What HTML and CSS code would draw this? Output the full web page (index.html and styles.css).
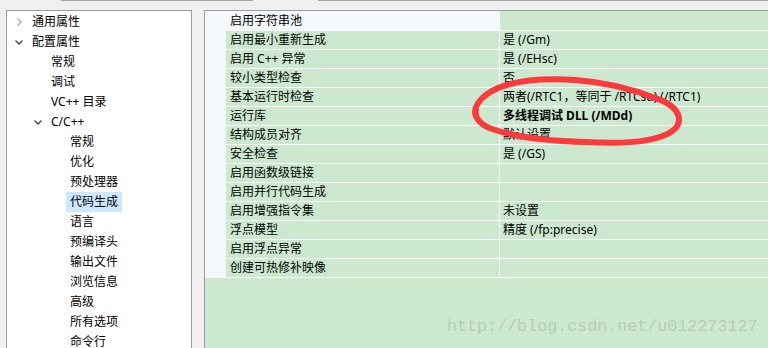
FILE: index.html
```html
<!DOCTYPE html>
<html lang="zh-CN">
<head>
  <meta charset="UTF-8">
  <title>代码生成</title>
  <link rel="stylesheet" href="styles.css">
</head>
<body>
  <div class="topbar">
    <span class="seg seg-a"></span>
    <span class="seg seg-b"></span>
  </div>

  <div class="main">
    <!-- 左侧树 -->
    <div class="tree">
      <div class="node lv0"><span class="arrow"><svg width="8" height="8" viewBox="0 0 8 8"><polyline class="closed" points="2.5,0.5 6,4 2.5,7.5"/></svg></span><span class="label">通用属性</span></div>
      <div class="node lv0"><span class="arrow"><svg width="8" height="8" viewBox="0 0 8 8"><polyline class="open" points="0.5,2.5 4,6 7.5,2.5"/></svg></span><span class="label">配置属性</span></div>
      <div class="node lv1"><span class="arrow"></span><span class="label">常规</span></div>
      <div class="node lv1"><span class="arrow"></span><span class="label">调试</span></div>
      <div class="node lv1"><span class="arrow"></span><span class="label">VC++ 目录</span></div>
      <div class="node lv1"><span class="arrow"><svg width="8" height="8" viewBox="0 0 8 8"><polyline class="open" points="0.5,2.5 4,6 7.5,2.5"/></svg></span><span class="label">C/C++</span></div>
      <div class="node lv2"><span class="arrow"></span><span class="label">常规</span></div>
      <div class="node lv2"><span class="arrow"></span><span class="label">优化</span></div>
      <div class="node lv2"><span class="arrow"></span><span class="label">预处理器</span></div>
      <div class="node lv2"><span class="arrow"></span><span class="label selected">代码生成</span></div>
      <div class="node lv2"><span class="arrow"></span><span class="label">语言</span></div>
      <div class="node lv2"><span class="arrow"></span><span class="label">预编译头</span></div>
      <div class="node lv2"><span class="arrow"></span><span class="label">输出文件</span></div>
      <div class="node lv2"><span class="arrow"></span><span class="label">浏览信息</span></div>
      <div class="node lv2"><span class="arrow"></span><span class="label">高级</span></div>
      <div class="node lv2"><span class="arrow"></span><span class="label">所有选项</span></div>
      <div class="node lv2"><span class="arrow"></span><span class="label">命令行</span></div>
    </div>

    <!-- 属性表 -->
    <div class="props">
      <div class="row first"><span class="strip"></span><span class="name">启用字符串池</span><span class="value"></span></div>
      <div class="row"><span class="strip"></span><span class="name">启用最小重新生成</span><span class="value">是 (/Gm)</span></div>
      <div class="row"><span class="strip"></span><span class="name">启用 C++ 异常</span><span class="value">是 (/EHsc)</span></div>
      <div class="row"><span class="strip"></span><span class="name">较小类型检查</span><span class="value">否</span></div>
      <div class="row"><span class="strip"></span><span class="name">基本运行时检查</span><span class="value">两者(/RTC1，等同于 /RTCsu) (/RTC1)</span></div>
      <div class="row"><span class="strip"></span><span class="name">运行库</span><span class="value bold">多线程调试 DLL (/MDd)</span></div>
      <div class="row"><span class="strip"></span><span class="name">结构成员对齐</span><span class="value">默认设置</span></div>
      <div class="row"><span class="strip"></span><span class="name">安全检查</span><span class="value">是 (/GS)</span></div>
      <div class="row"><span class="strip"></span><span class="name">启用函数级链接</span><span class="value"></span></div>
      <div class="row"><span class="strip"></span><span class="name">启用并行代码生成</span><span class="value"></span></div>
      <div class="row"><span class="strip"></span><span class="name">启用增强指令集</span><span class="value">未设置</span></div>
      <div class="row"><span class="strip"></span><span class="name">浮点模型</span><span class="value">精度 (/fp:precise)</span></div>
      <div class="row"><span class="strip"></span><span class="name">启用浮点异常</span><span class="value"></span></div>
      <div class="row"><span class="strip"></span><span class="name">创建可热修补映像</span><span class="value"></span></div>
      <div class="fill"></div>
    </div>
  </div>

  <!-- 手绘红圈标注 -->
  <svg class="mark" width="768" height="348" viewBox="0 0 768 348">
    <path d="M 480,122 C 468,110 480,96 498,88 C 518,80 545,78 575,80 C 605,82 635,90 658,99 C 682,108 684,123 671,132 C 655,142 620,144 585,142 C 550,141 515,137 492,129 C 481,125 474,118 476,110"/>
  </svg>

  <div class="watermark">http://blog.csdn.net/u012273127</div>
</body>
</html>
```

FILE: styles.css
```css
body {
  margin: 0;
  width: 768px;
  height: 348px;
  overflow: hidden;
  background: #f0f0f0;
  font-family: "Noto Sans", "Noto Sans CJK SC", sans-serif;
  font-size: 12px;
  color: #000;
}

.topbar {
  display: flex;
  height: 10px;
}

.seg {
  height: 0;
  border-top: 1px solid #a8a8a8;
}

.seg-a {
  margin-left: 61px;
  width: 192px;
}

.seg-b {
  margin-left: 65px;
  flex: 1;
}

.main {
  display: flex;
  gap: 12px;
  padding-left: 6px;
  height: 338px;
  overflow: hidden;
}

/* tree */
.tree {
  width: 186px;
  box-sizing: border-box;
  background: #fff;
  border: 1px solid #9c9c9c;
  border-bottom: none;
  padding-top: 1px;
}

.node {
  display: flex;
  align-items: center;
  height: 20px;
  white-space: nowrap;
}

.lv0 { padding-left: 6px; }
.lv1 { padding-left: 25px; }
.lv2 { padding-left: 44px; }

.arrow {
  display: flex;
  align-items: center;
  width: 15px;
  height: 20px;
}

.arrow svg {
  margin-left: 2px;
}

.arrow polyline {
  fill: none;
  stroke-width: 1.3;
}

.arrow .closed { stroke: #a6a6a6; }
.arrow .open { stroke: #404040; }

.label {
  padding: 0 4px;
  line-height: 20px;
}

.label.selected {
  background: #cce8ff;
}

/* property grid */
.props {
  flex: 1;
  display: flex;
  flex-direction: column;
  border-left: 1px solid #9c9c9c;
  border-top: 1px solid #9c9c9c;
  background: #cce8cf;
}

.row {
  display: grid;
  grid-template-columns: 21px 274px 1fr;
  height: 19px;
}

.row.first {
  height: 20px;
}

.strip {
  background: #f4f7fc;
}

.name,
.value {
  box-sizing: border-box;
  border-bottom: 1px solid #fff;
  line-height: 18px;
  white-space: nowrap;
  overflow: hidden;
}

.name {
  padding-left: 4px;
  border-right: 1px solid #fff;
}

.value {
  padding-left: 3px;
}

.row.first .name {
  background: #f4f7fc;
  line-height: 19px;
}

.row.first .value {
  line-height: 19px;
}

.bold {
  font-weight: bold;
}

.fill {
  flex: 1;
}

/* overlays */
.mark {
  position: absolute;
  left: 0;
  top: 0;
  pointer-events: none;
}

.mark path {
  fill: none;
  stroke: #fb3a3e;
  stroke-width: 6;
  stroke-linecap: round;
}

.watermark {
  position: absolute;
  left: 447px;
  top: 316px;
  font-family: "Liberation Mono", monospace;
  font-size: 16.7px;
  line-height: 22px;
  color: #b6cdb9;
  pointer-events: none;
}
```
